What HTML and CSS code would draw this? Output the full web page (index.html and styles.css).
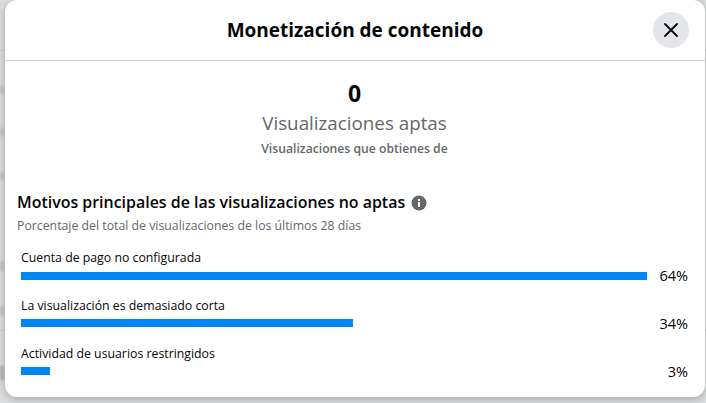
FILE: index.html
```html
<!DOCTYPE html>
<html lang="es">
<head>
    <title>Monetización de contenido</title>
    <meta charset="utf-8">
    <link rel="stylesheet" href="styles.css">
</head>
<body>
<div class="backdrop">
    <!-- blurred page behind the dialog, only the edges show -->
    <div class="bg-line bg-line-top"></div>
    <div class="bg-line bg-line-low"></div>
    <div class="bg-mark bg-mark-1"></div>
    <div class="bg-mark bg-mark-2"></div>
    <div class="bg-mark bg-mark-3"></div>
    <div class="bg-mark bg-mark-4"></div>
    <div class="bg-mark bg-mark-5"></div>
    <div class="bg-mark bg-mark-6"></div>
    <div class="dialog">
        <div class="dialog-header">
            <h2>Monetización de contenido</h2>
            <div class="close-button">
                <svg width="16" height="16" viewBox="0 0 16 16"><path d="M2 2L14 14M14 2L2 14" stroke="#050505" stroke-width="1.8" stroke-linecap="round" fill="none"/></svg>
            </div>
        </div>
        <div class="summary">
            <div class="summary-value">0</div>
            <div class="summary-label">Visualizaciones aptas</div>
            <div class="summary-note">Visualizaciones que obtienes de</div>
        </div>
        <div class="reasons">
            <div class="reasons-title">
                <span>Motivos principales de las visualizaciones no aptas</span>
                <svg class="info" width="16" height="16" viewBox="0 0 16 16"><circle cx="8" cy="8" r="7.5" fill="#65676b"/><rect x="7" y="7" width="2" height="5" fill="#fff"/><rect x="7" y="4" width="2" height="2" fill="#fff"/></svg>
            </div>
            <div class="reasons-sub">Porcentaje del total de visualizaciones de los últimos 28 días</div>
            <div class="reason">
                <div class="reason-body">
                    <div class="reason-name">Cuenta de pago no configurada</div>
                    <div class="bar" style="width: 100%"></div>
                </div>
                <div class="reason-pct">64%</div>
            </div>
            <div class="reason">
                <div class="reason-body">
                    <div class="reason-name">La visualización es demasiado corta</div>
                    <div class="bar" style="width: 53%"></div>
                </div>
                <div class="reason-pct">34%</div>
            </div>
            <div class="reason">
                <div class="reason-body">
                    <div class="reason-name">Actividad de usuarios restringidos</div>
                    <div class="bar" style="width: 4.6%"></div>
                </div>
                <div class="reason-pct">3%</div>
            </div>
        </div>
    </div>
</div>
</body>
</html>
```
FILE: styles.css
```css
html, body {
    margin: 0;
    height: 100%;
}

body {
    font-family: "Open Sans", "Noto Sans", sans-serif;
    color: #050505;
    overflow: hidden;
}

.backdrop {
    position: relative;
    height: 403px;
    background: #dcddde;
    padding: 0 1px 0 5px;
    box-sizing: border-box;
}

.bg-line {
    position: absolute;
    left: 0;
    right: 0;
    height: 1px;
    background: #cfd0d2;
}
.bg-line-top {
    top: 50px;
}
.bg-line-low {
    top: 330px;
}

.bg-mark {
    position: absolute;
    left: 0;
    width: 4px;
    background: #c4c5c7;
    filter: blur(1px);
}
.bg-mark-1 { top: 86px; height: 8px; }
.bg-mark-2 { top: 128px; height: 8px; }
.bg-mark-3 { top: 172px; height: 8px; }
.bg-mark-4 { top: 261px; height: 10px; }
.bg-mark-5 { top: 306px; height: 10px; }
.bg-mark-6 { top: 366px; height: 14px; background: #b4b5b7; }

.dialog {
    position: relative;
    height: 397px;
    background: #fff;
    border-radius: 12px;
    box-shadow: 0 2px 8px rgba(0, 0, 0, 0.25);
}

.dialog-header {
    height: 60px;
    border-bottom: 1px solid #ced0d4;
    display: flex;
    align-items: center;
    justify-content: center;
    position: relative;
}

.dialog-header h2 {
    margin: 0;
    font-size: 19px;
    font-weight: 700;
}

.close-button {
    position: absolute;
    right: 16px;
    top: 12px;
    width: 36px;
    height: 36px;
    border-radius: 50%;
    background: #e4e6eb;
    display: flex;
    align-items: center;
    justify-content: center;
}

.summary {
    text-align: center;
    padding-top: 17px;
    padding-right: 1px;
}

.summary-value {
    font-size: 23px;
    font-weight: 700;
    line-height: 31px;
}

.summary-label {
    font-size: 18.8px;
    line-height: 28px;
    color: #65676b;
}

.summary-note {
    font-size: 12.2px;
    font-weight: 600;
    line-height: 24px;
    color: #65676b;
}

.reasons {
    padding: 29px 17px 0 12px;
}

.reasons-title {
    display: flex;
    align-items: center;
    gap: 6px;
    font-size: 15.95px;
    font-weight: 600;
    line-height: 25px;
}

.reasons-sub {
    font-size: 12.3px;
    line-height: 18px;
    color: #65676b;
    margin-top: 2px;
    margin-bottom: 9px;
}

.reason {
    display: flex;
    align-items: flex-end;
    padding-left: 4px;
    height: 47.6px;
    box-sizing: border-box;
}

.reason-body {
    flex: 1;
    padding-bottom: 12px;
}

.reason-name {
    font-size: 12.3px;
    line-height: 18px;
    margin-bottom: 4.2px;
}

.bar {
    height: 8px;
    background: #0087f5;
}

.reason-pct {
    width: 41px;
    text-align: right;
    font-size: 14.5px;
    line-height: 20px;
    padding-bottom: 5.2px;
}

.info {
    flex: none;
}
```
